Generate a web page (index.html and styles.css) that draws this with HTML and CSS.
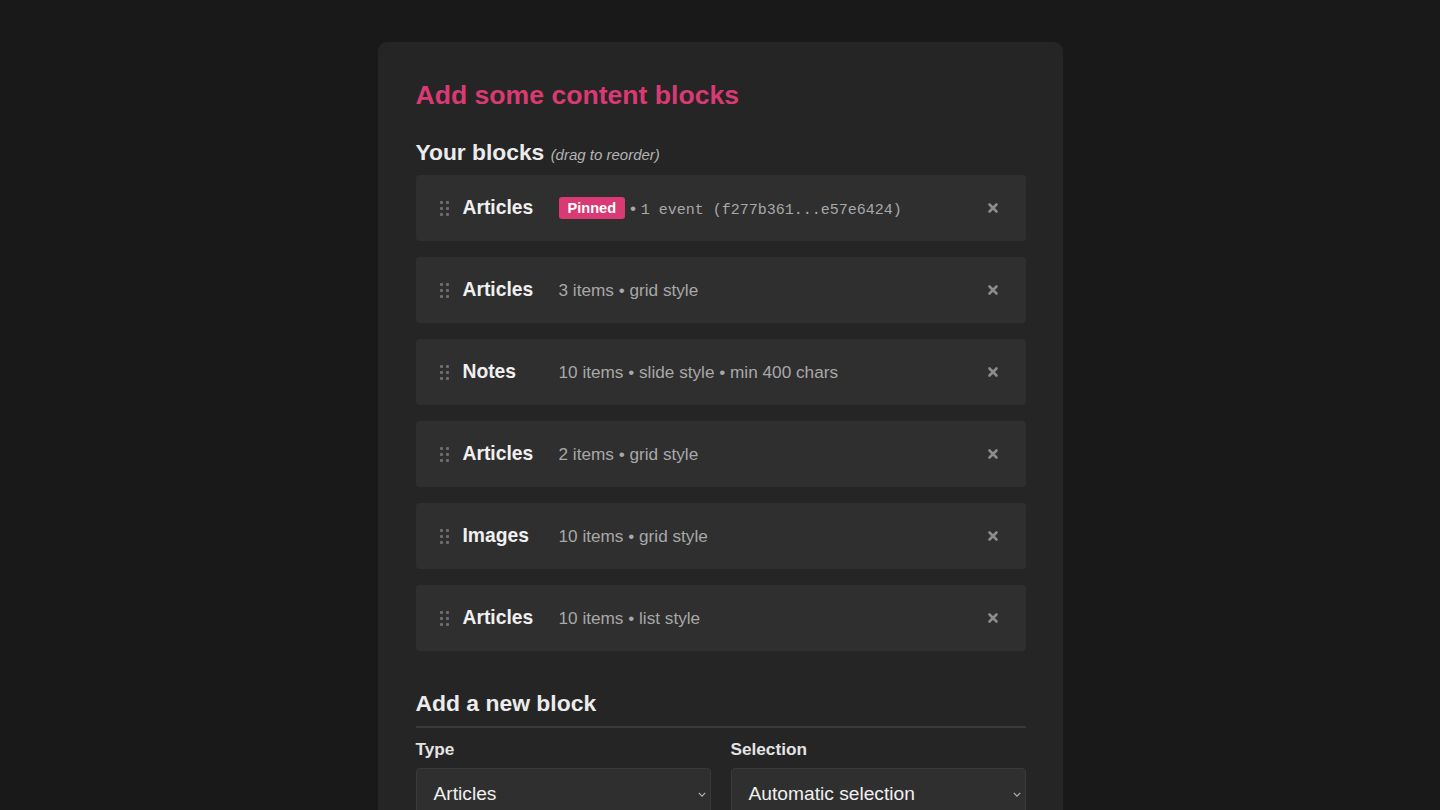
FILE: index.html
```html
<!DOCTYPE html>
<html lang="en">
<head>
<meta charset="utf-8">
<title>Add some content blocks</title>
<link rel="stylesheet" href="styles.css">
</head>
<body>
<main class="card">
  <h1 class="title">Add some content blocks</h1>
  <h2 class="section-title">Your blocks <span class="hint">(drag to reorder)</span></h2>
  <ul class="blocks">
    <li class="block">
      <span class="handle"><i></i><i></i><i></i><i></i><i></i><i></i></span>
      <span class="name">Articles</span>
      <span class="details"><span class="badge">Pinned</span> • <span class="mono">1 event (f277b361...e57e6424)</span></span>
      <button class="remove" aria-label="Remove"><svg viewBox="0 0 12 12" width="12" height="12"><path d="M2.5 2.5 L9.5 9.5 M9.5 2.5 L2.5 9.5" /></svg></button>
    </li>
    <li class="block">
      <span class="handle"><i></i><i></i><i></i><i></i><i></i><i></i></span>
      <span class="name">Articles</span>
      <span class="details">3 items • grid style</span>
      <button class="remove" aria-label="Remove"><svg viewBox="0 0 12 12" width="12" height="12"><path d="M2.5 2.5 L9.5 9.5 M9.5 2.5 L2.5 9.5" /></svg></button>
    </li>
    <li class="block">
      <span class="handle"><i></i><i></i><i></i><i></i><i></i><i></i></span>
      <span class="name">Notes</span>
      <span class="details">10 items • slide style • min 400 chars</span>
      <button class="remove" aria-label="Remove"><svg viewBox="0 0 12 12" width="12" height="12"><path d="M2.5 2.5 L9.5 9.5 M9.5 2.5 L2.5 9.5" /></svg></button>
    </li>
    <li class="block">
      <span class="handle"><i></i><i></i><i></i><i></i><i></i><i></i></span>
      <span class="name">Articles</span>
      <span class="details">2 items • grid style</span>
      <button class="remove" aria-label="Remove"><svg viewBox="0 0 12 12" width="12" height="12"><path d="M2.5 2.5 L9.5 9.5 M9.5 2.5 L2.5 9.5" /></svg></button>
    </li>
    <li class="block">
      <span class="handle"><i></i><i></i><i></i><i></i><i></i><i></i></span>
      <span class="name">Images</span>
      <span class="details">10 items • grid style</span>
      <button class="remove" aria-label="Remove"><svg viewBox="0 0 12 12" width="12" height="12"><path d="M2.5 2.5 L9.5 9.5 M9.5 2.5 L2.5 9.5" /></svg></button>
    </li>
    <li class="block">
      <span class="handle"><i></i><i></i><i></i><i></i><i></i><i></i></span>
      <span class="name">Articles</span>
      <span class="details">10 items • list style</span>
      <button class="remove" aria-label="Remove"><svg viewBox="0 0 12 12" width="12" height="12"><path d="M2.5 2.5 L9.5 9.5 M9.5 2.5 L2.5 9.5" /></svg></button>
    </li>
  </ul>
  <h2 class="new-title">Add a new block</h2>
  <div class="form-row">
    <label class="field">
      <span class="label">Type</span>
      <span class="select"><span>Articles</span><svg class="chev" viewBox="0 0 10 6" width="8" height="5"><path d="M1 1 L5 5 L9 1" /></svg></span>
    </label>
    <label class="field">
      <span class="label">Selection</span>
      <span class="select"><span>Automatic selection</span><svg class="chev" viewBox="0 0 10 6" width="8" height="5"><path d="M1 1 L5 5 L9 1" /></svg></span>
    </label>
  </div>
</main>
</body>
</html>
```

FILE: styles.css
```css
* { box-sizing: border-box; }
html, body { margin: 0; padding: 0; }
body {
  background: #191919;
  font-family: "Liberation Sans", Arial, sans-serif;
  color: #e8e8e8;
  height: 810px;
  overflow: hidden;
}
.card {
  width: 685px;
  margin: 42px auto 0;
  background: #252525;
  border-radius: 9px;
  padding: 38px 37px 40px 38px;
  min-height: 900px;
}
.title {
  margin: 0;
  font-size: 26.6px;
  line-height: 30px;
  font-weight: 700;
  color: #d93a73;
}
.section-title {
  margin: 29px 0 7px;
  font-size: 22.8px;
  line-height: 26px;
  font-weight: 700;
  color: #ececec;
}
.hint {
  font-size: 15px;
  font-weight: 400;
  font-style: italic;
  color: #b4b4b4;
}
.blocks {
  list-style: none;
  margin: 0;
  padding: 0;
  display: flex;
  flex-direction: column;
  gap: 16px;
}
.block {
  height: 66px;
  background: #2f2f2f;
  border-radius: 4px;
  display: flex;
  align-items: center;
  padding: 0 27px 0 24px;
}
.handle {
  display: grid;
  grid-template-columns: 3px 3px;
  grid-template-rows: 3px 3px 3px;
  column-gap: 3px;
  row-gap: 3px;
  width: 9px;
  margin-right: 14px;
}
.handle i {
  display: block;
  width: 3px;
  height: 3px;
  background: #6e6e6e;
  border-radius: 1px;
}
.name {
  width: 96px;
  font-size: 19.3px;
  font-weight: 700;
  color: #f0f0f0;
}
.details {
  flex: 1;
  font-size: 17.2px;
  color: #a8a8a8;
}
.badge {
  display: inline-block;
  background: #d93a73;
  color: #ffffff;
  font-size: 14.6px;
  font-weight: 700;
  line-height: 22px;
  padding: 0 9px;
  border-radius: 3px;
  vertical-align: 1px;
}
.mono {
  font-family: "Liberation Mono", "DejaVu Sans Mono", monospace;
  font-size: 15px;
  color: #a8a8a8;
}
.remove {
  border: 0;
  background: none;
  padding: 0;
  width: 12px;
  height: 12px;
  display: flex;
  cursor: pointer;
}
.remove svg path {
  stroke: #8c8c8c;
  stroke-width: 2.6;
  stroke-linecap: round;
  fill: none;
}
.new-title {
  margin: 39px 0 0;
  font-size: 22.9px;
  line-height: 26px;
  font-weight: 700;
  color: #ececec;
  padding-bottom: 10px;
  border-bottom: 2px solid #3a3a3a;
}
.form-row {
  display: grid;
  grid-template-columns: 1fr 1fr;
  column-gap: 20px;
  margin-top: 12px;
}
.field {
  display: flex;
  flex-direction: column;
}
.label {
  font-size: 17.2px;
  line-height: 18px;
  font-weight: 700;
  color: #e4e4e4;
  margin-bottom: 10px;
}
.select {
  height: 52px;
  background: #2f2f2f;
  border: 1px solid #3a3a3a;
  border-radius: 4px;
  display: flex;
  align-items: center;
  justify-content: space-between;
  padding: 0 4px 0 17px;
  font-size: 19.2px;
  color: #f0f0f0;
}
.chev path {
  stroke: #b0b0b0;
  stroke-width: 1.6;
  fill: none;
}
```
